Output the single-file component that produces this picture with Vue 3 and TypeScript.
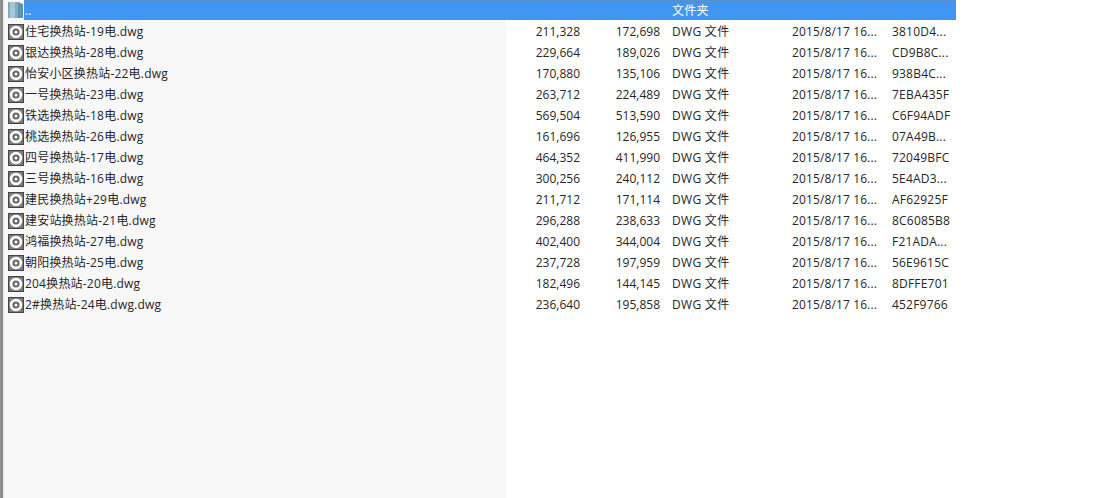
<script setup lang="ts">
interface FileRow { name: string; size: string; packed: string; date: string; crc: string }
const files: FileRow[] = [
  { name: '住宅换热站-19电.dwg', size: '211,328', packed: '172,698', date: '2015/8/17 16...', crc: '3810D4...' },
  { name: '银达换热站-28电.dwg', size: '229,664', packed: '189,026', date: '2015/8/17 16...', crc: 'CD9B8C...' },
  { name: '怡安小区换热站-22电.dwg', size: '170,880', packed: '135,106', date: '2015/8/17 16...', crc: '938B4C...' },
  { name: '一号换热站-23电.dwg', size: '263,712', packed: '224,489', date: '2015/8/17 16...', crc: '7EBA435F' },
  { name: '铁选换热站-18电.dwg', size: '569,504', packed: '513,590', date: '2015/8/17 16...', crc: 'C6F94ADF' },
  { name: '桃选换热站-26电.dwg', size: '161,696', packed: '126,955', date: '2015/8/17 16...', crc: '07A49B...' },
  { name: '四号换热站-17电.dwg', size: '464,352', packed: '411,990', date: '2015/8/17 16...', crc: '72049BFC' },
  { name: '三号换热站-16电.dwg', size: '300,256', packed: '240,112', date: '2015/8/17 16...', crc: '5E4AD3...' },
  { name: '建民换热站+29电.dwg', size: '211,712', packed: '171,114', date: '2015/8/17 16...', crc: 'AF62925F' },
  { name: '建安站换热站-21电.dwg', size: '296,288', packed: '238,633', date: '2015/8/17 16...', crc: '8C6085B8' },
  { name: '鸿福换热站-27电.dwg', size: '402,400', packed: '344,004', date: '2015/8/17 16...', crc: 'F21ADA...' },
  { name: '朝阳换热站-25电.dwg', size: '237,728', packed: '197,959', date: '2015/8/17 16...', crc: '56E9615C' },
  { name: '204换热站-20电.dwg', size: '182,496', packed: '144,145', date: '2015/8/17 16...', crc: '8DFFE701' },
  { name: '2#换热站-24电.dwg.dwg', size: '236,640', packed: '195,858', date: '2015/8/17 16...', crc: '452F9766' },
]
</script>

<template>
  <div class="page">
    <div class="edge"></div>
    <div class="list">
      <div class="row parent">
        <svg class="icon" width="15" height="18" viewBox="0 0 15 18">
          <path d="M0 1h11l4 2v14H0z" fill="#7fabc0" />
          <path d="M2 1h5v16H2z" fill="#a5c8d6" />
          <path d="M10 2l5 1v14h-5z" fill="#5c93ad" />
        </svg>
        <div class="bar">
          <span class="name dots">..</span>
          <span class="num"></span>
          <span class="num"></span>
          <span class="type">文件夹</span>
          <span class="date"></span>
          <span class="crc"></span>
        </div>
      </div>
      <div v-for="f in files" :key="f.name" class="row">
        <svg class="icon" width="16" height="16" viewBox="0 0 16 16">
          <rect width="16" height="16" fill="#444" />
          <rect x="1" y="1" width="14" height="14" fill="#7d7d7d" />
          <circle cx="8" cy="8" r="6.2" fill="#fff" />
          <circle cx="8" cy="8" r="3.6" fill="#666" />
          <circle cx="8" cy="8" r="1.5" fill="#fff" />
        </svg>
        <div class="cells">
          <span class="name">{{ f.name }}</span>
          <span class="num">{{ f.size }}</span>
          <span class="num">{{ f.packed }}</span>
          <span class="type">DWG 文件</span>
          <span class="date">{{ f.date }}</span>
          <span class="crc">{{ f.crc }}</span>
        </div>
      </div>
    </div>
  </div>
</template>

<style>
html, body { margin: 0; background: #fff; }
</style>

<style scoped>
.page {
  width: 1116px;
  height: 498px;
  display: flex;
  overflow: hidden;
  background: #fff;
  font-family: "Open Sans", "Noto Sans CJK SC", sans-serif;
  font-size: 12px;
  line-height: 16px;
  color: #262626;
}
.edge {
  width: 4px;
  background: #8f8f8f;
  border-right: 1px solid #e4e4e4;
  box-sizing: border-box;
  flex: none;
}
.list {
  width: 952px;
  flex: none;
  background: linear-gradient(90deg, #f8f8f8 502px, transparent 502px);
}
.row {
  height: 21px;
  display: flex;
  align-items: center;
  white-space: nowrap;
  padding-left: 3px;
}
.row.parent { height: 20px; margin-bottom: 1px; }
.icon { flex: none; margin-left: 1px; margin-right: 1px; }
.parent .icon { margin-right: 2px; }
.cells, .bar {
  flex: 1;
  display: grid;
  height: 100%;
  align-items: center;
  grid-template-columns: 480px 75px 80px 132px 100px 64px;
}
.bar {
  margin-left: -1px;
  height: 20px;
  padding-top: 2px;
  box-sizing: border-box;
  background: #3f96f3;
  background-image: linear-gradient(#5b8ec2 0, #3f96f3 3px);
  color: #fff;
  grid-template-columns: 481px 75px 80px 132px 100px 47px;
}
.name { letter-spacing: 0.2px; }
.dots { padding-left: 1px; }
.num { text-align: right; }
.type { padding-left: 12px; letter-spacing: 0.3px; }
.date { letter-spacing: 0.12px; }
.crc { letter-spacing: 0.2px; }
</style>
